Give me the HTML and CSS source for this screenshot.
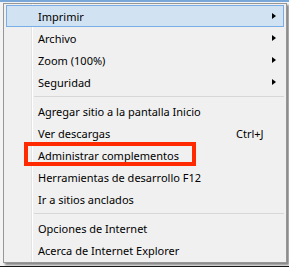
FILE: index.html
```html
<!DOCTYPE html>
<html lang="es">
<head>
    <meta charset="UTF-8">
    <title>Menú Herramientas</title>
    <link rel="stylesheet" href="styles.css">
</head>
<body>
    <div class="top-strip"></div>

    <!-- Tools menu -->
    <div class="menu">
        <div class="item hover">Imprimir<span class="arrow"></span></div>
        <div class="item">Archivo<span class="arrow"></span></div>
        <div class="item">Zoom (100%)<span class="arrow"></span></div>
        <div class="item">Seguridad<span class="arrow"></span></div>
        <div class="sep"></div>
        <div class="item">Agregar sitio a la pantalla Inicio</div>
        <div class="item">Ver descargas<span class="shortcut">Ctrl+J</span></div>
        <div class="item marked">Administrar complementos<span class="mark"></span></div>
        <div class="item">Herramientas de desarrollo F12</div>
        <div class="item">Ir a sitios anclados</div>
        <div class="sep"></div>
        <div class="item">Opciones de Internet</div>
        <div class="item">Acerca de Internet Explorer</div>
    </div>

    <div class="bottom-strip"></div>
</body>
</html>
```

FILE: styles.css
```css
body {
    margin: 0;
    width: 289px;
    height: 267px;
    overflow: hidden;
    background-color: #f3f3f3;
    font-family: "Noto Sans", "Liberation Sans", sans-serif;
    font-size: 11px;
    color: #000;
}

.top-strip {
    height: 2px;
    background-color: #79a8d8;
}

/* --- Menu box --- */
.menu {
    margin: 1px 0 0 3px;
    width: 278px;
    padding: 1px 2px;
    border: 1px solid #979797;
    background-color: #f0f0f0;
    /* gutter line next to icon column */
    background-image: linear-gradient(to right, transparent 27px, #e2e3e3 27px, #e2e3e3 28px, #ffffff 28px, #ffffff 29px, transparent 29px);
    box-shadow: 2px 2px 2px rgba(0, 0, 0, 0.45);
}

.item {
    position: relative;
    display: flex;
    align-items: center;
    height: 22px;
    padding-left: 31px;
    box-sizing: border-box;
    border: 1px solid transparent;
    white-space: nowrap;
}

.item.hover {
    background-color: #d1e2f2;
    border-color: #78aee5;
}

.arrow {
    position: absolute;
    right: 7px;
    top: 7px;
    width: 0;
    height: 0;
    border-left: 4px solid #000;
    border-top: 3.5px solid transparent;
    border-bottom: 3.5px solid transparent;
}

.shortcut {
    position: absolute;
    left: 229px;
}

.sep {
    height: 7px;
    margin-left: 28px;
    background: linear-gradient(#d7d7d7, #d7d7d7) no-repeat 0 3px / 100% 1px;
}

/* red annotation box */
.mark {
    position: absolute;
    left: 17px;
    top: -3px;
    width: 172px;
    height: 24px;
    box-sizing: border-box;
    border: 4px solid #ff2a00;
}

.bottom-strip {
    margin-top: 3px;
    height: 6px;
    background-color: #151515;
}
```
